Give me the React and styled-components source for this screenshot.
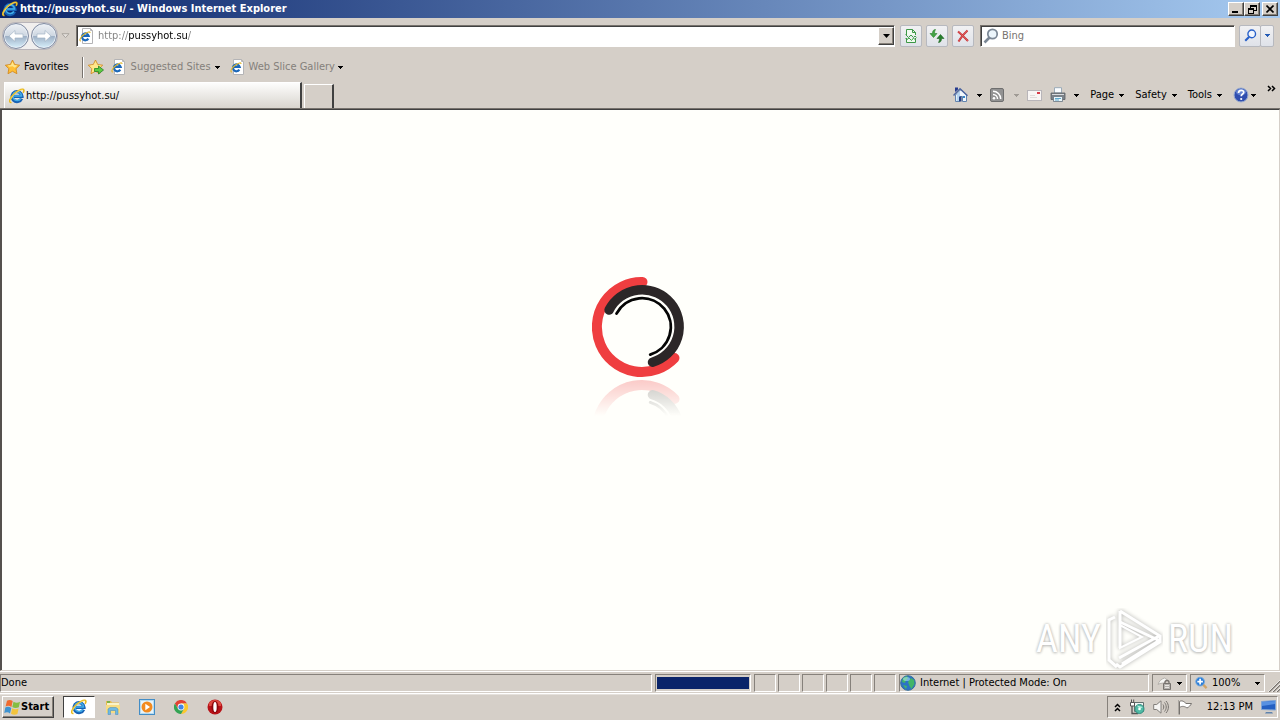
import React from "react";
import styled, { createGlobalStyle, css } from "styled-components";

const Global = createGlobalStyle`
  * { box-sizing: border-box; }
  body { margin: 0; background: #d5cfc8; }
  body, button, input, select {
    font-family: "DejaVu Sans Condensed", "DejaVu Sans", sans-serif;
    font-size: 11px;
    line-height: 14px;
    color: #000;
  }
  svg { display: block; flex: none; }
`;

const Window = styled.div`
  min-height: 100vh;
  display: flex;
  flex-direction: column;
  background: #d5cfc8;
`;

const TitleBar = styled.header`
  height: 18px;
  padding: 0 2px;
  display: flex;
  align-items: center;
  gap: 2px;
  background: linear-gradient(90deg, #0a246a, #a6caf0);
`;
const Title = styled.h1`
  flex: 1;
  margin: 0;
  color: #fff;
  font-size: 11px;
  line-height: 14px;
  white-space: nowrap;
`;
const raised = css`
  background: #d5cfc8;
  border: 1px solid;
  border-color: #fff #404040 #404040 #fff;
  box-shadow: inset -1px -1px 0 #868078;
`;
const WindowButtons = styled.div`
  display: flex;
`;
const WindowButton = styled.button`
  ${raised}
  width: 16px;
  height: 14px;
  padding: 0;
  display: flex;
  align-items: center;
  justify-content: center;
  margin-left: ${(p) => (p.$apart ? "2px" : "0")};
`;

const NavBar = styled.nav`
  height: 34px;
  padding: 1px 6px 0 3px;
  display: flex;
  align-items: center;
`;
const NavArrows = styled.div`
  display: flex;
  gap: 2px;
  border-radius: 14px;
  background: #f1efee;
  box-shadow: 0 0 0 1px #b9b5ba;
`;
const RoundButton = styled.button`
  width: 26px;
  height: 26px;
  padding: 0;
  border: 1px solid #7f8aa0;
  border-radius: 50%;
  display: flex;
  align-items: center;
  justify-content: center;
  background: linear-gradient(#eef1f5 0%, #ced7e2 48%, #9fb1c6 52%, #d7f0fc 100%);
  box-shadow: inset 0 0 0 1px #e8eef5;
`;
const PlainButton = styled.button`
  padding: 0;
  border: 0;
  background: none;
  display: flex;
  align-items: center;
  gap: ${(p) => p.$gap || 0}px;
  color: ${(p) => (p.$muted ? "#84807b" : "#000")};
  white-space: nowrap;
`;
const HistoryButton = styled(PlainButton)`
  margin: 0 6px 0 4px;
`;
const Field = styled.div`
  flex: ${(p) => (p.$width ? "none" : "1")};
  width: ${(p) => (p.$width ? `${p.$width}px` : "auto")};
  min-width: 0;
  height: 22px;
  padding-left: 2px;
  display: flex;
  align-items: center;
  gap: 3px;
  background: #fff;
  border: 1px solid;
  border-color: #77726d #fff #fff #77726d;
  box-shadow: inset 1px 1px 0 #404040;
`;
const TextInput = styled.input`
  flex: 1;
  min-width: 0;
  padding: 0;
  border: 0;
  outline: 0;
  background: none;
  color: #77736f;
  &::placeholder { color: #77736f; opacity: 1; }
`;
const AddressInput = styled(TextInput)`
  background: linear-gradient(90deg, #808080 31px, #000 31px 90px, #808080 90px);
  background-clip: text;
  color: transparent;
`;
const DropButton = styled.button`
  ${raised}
  width: 16px;
  height: 18px;
  padding: 0;
  display: flex;
  align-items: center;
  justify-content: center;
`;
const NavButtons = styled.div`
  display: flex;
  gap: 4px;
  margin: 0 6px 0 5px;
`;
const ToolButton = styled.button`
  width: ${(p) => p.$width || 22}px;
  height: 22px;
  padding: 0;
  display: flex;
  align-items: center;
  justify-content: center;
  border: 1px solid #b7b9bf;
  border-radius: 2px;
  background: linear-gradient(#f1f1f3, #dfe2e9);
`;
const SearchButtons = styled.div`
  display: flex;
  margin-left: 4px;
  ${ToolButton} + ${ToolButton} { margin-left: -1px; }
`;

const FavoritesBar = styled.div`
  height: 30px;
  padding-left: 5px;
  display: flex;
  align-items: center;
`;
const Divider = styled.span`
  width: 2px;
  height: 21px;
  margin: 0 4px 0 13px;
  background: linear-gradient(90deg, #77726d 50%, #fff 50%);
`;
const FavoriteLinks = styled.div`
  display: flex;
  gap: 10px;
  margin-left: 7px;
`;

const TabRow = styled.div`
  height: 27px;
  padding-left: 4px;
  display: flex;
  align-items: flex-end;
  border-bottom: 1px solid #77726d;
`;
const Tab = styled.button`
  width: 298px;
  height: 26px;
  padding: 1px 4px 0;
  display: flex;
  align-items: center;
  gap: 1px;
  border: 1px solid;
  border-color: #fff #404040 transparent #fff;
  border-bottom: 0;
  border-right-width: 2px;
  background: linear-gradient(#fdfdfc, #d9d5cf);
`;
const NewTab = styled.button`
  width: 30px;
  height: 24px;
  margin-left: 2px;
  border: 1px solid;
  border-color: #fff #404040 transparent #fff;
  border-right-width: 2px;
  border-bottom: 0;
  background: #d5cfc8;
`;
const CommandBar = styled.div`
  height: 26px;
  margin-left: auto;
  padding-right: 4px;
  display: flex;
  align-items: center;
  gap: 11px;
`;
const CommandIcons = styled.div`
  display: flex;
  align-items: center;
  gap: 8px;
`;
const Overflow = styled(PlainButton)`
  align-self: flex-start;
  padding-top: 3px;
`;

const Page = styled.main`
  flex: 1;
  min-height: 300px;
  position: relative;
  display: flex;
  justify-content: center;
  align-items: center;
  padding-bottom: 84px;
  background: #fffffb;
  border: 1px solid;
  border-color: #404040 #d5cfc8 #d5cfc8 #55514d;
  box-shadow: inset 1px 0 0 #55514d;
`;
const Watermark = styled.div`
  position: absolute;
  right: 46px;
  bottom: 0;
  height: 62px;
  display: flex;
  align-items: center;
  gap: 5px;
  font-family: "Roboto Condensed", "Liberation Sans Narrow", "Liberation Sans", sans-serif;
  font-size: 38px;
  line-height: 50px;
  color: #fff;
  text-shadow: 0 0 3px #b4b4b2, 0 1px 3px #c8c8c5;
`;

const StatusBar = styled.footer`
  height: 23px;
  padding: 2px 0 1px;
  display: flex;
  gap: 3px;
  border-top: 1px solid #fff;
  border-bottom: 1px solid #fff;
`;
const Pane = styled.div`
  flex: ${(p) => (p.$width ? "none" : "1")};
  width: ${(p) => (p.$width ? `${p.$width}px` : "auto")};
  padding: 0 ${(p) => p.$pad || 0}px;
  display: flex;
  align-items: center;
  gap: 4px;
  border: 1px solid;
  border-color: #86817b #fff #fff #86817b;
  white-space: nowrap;
  & > :last-child { margin-left: ${(p) => (p.$spread ? "auto" : "0")}; }
`;
const CellGroup = styled.div`
  display: flex;
  gap: 2px;
`;
const Progress = styled.div`
  flex: 1;
  height: 12px;
  background: #0a246a;
`;
const ResizeCorner = styled.div`
  display: flex;
  flex: none;
  align-items: flex-end;
`;

const TaskBar = styled.footer`
  height: 26px;
  padding: 0 2px 1px;
  display: flex;
  align-items: center;
  border-top: 1px solid #e5e1dc;
`;
const StartButton = styled.button`
  ${raised}
  width: 52px;
  height: 22px;
  padding: 0 1px;
  display: flex;
  align-items: center;
  font-weight: bold;
`;
const Launchers = styled.div`
  display: flex;
  gap: 2px;
  margin-left: 9px;
`;
const Launcher = styled.button`
  width: 32px;
  height: 22px;
  padding: 0;
  display: flex;
  align-items: center;
  justify-content: center;
  border: 1px solid transparent;
  background: none;
  ${(p) => p.$active && css`
    background: #fff;
    border-color: #404040 #fff #fff #404040;
  `}
`;
const Tray = styled.div`
  height: 22px;
  margin-left: auto;
  padding: 0 1px 0 6px;
  display: flex;
  align-items: center;
  gap: 8px;
  border: 1px solid;
  border-color: #86817b #fff #fff #86817b;
`;
const Clock = styled.time`
  margin-left: 6px;
  white-space: nowrap;
`;

const Caret = ({ color = "#000" }) => (
  <svg width="5" height="3" viewBox="0 0 5 3" shapeRendering="crispEdges">
    <path d="M0 0h5L2.500 3z" fill={color} />
  </svg>
);

const IE = ({ size = 16 }) => (
  <svg width={size} height={size} viewBox="0 0 16 16">
    <path d="M12.600 10.600A5 5 0 1 1 13 8.400H5" fill="none" stroke="#1762b5" strokeWidth="3.200" />
    <path d="M11.800 10.500A4.400 4.400 0 1 1 12.500 7.900H5" fill="none" stroke="#42aee9" strokeWidth="1.500" />
    <path d="M2.500 14.500C-1 15 1 9 6 5c4-3.500 8.600-5 8.900-2.700.1.800-.3 1.700-.8 2.600" fill="none" stroke="#e9b91e" strokeWidth="1.600" />
    <path d="M2 14C.6 13 2.600 8.500 7 5c3-2.300 6-3.600 7-3" fill="none" stroke="#ffed82" strokeWidth=".6" />
  </svg>
);

const PageIE = () => (
  <svg width="16" height="16" viewBox="0 0 16 16">
    <path d="M3.500.5h8l2 2v13h-10z" fill="#fff" stroke="#b4b4b6" />
    <path d="M11.500.5v2h2" fill="none" stroke="#b4b4b6" />
    <path d="M9.300 10.700A3.400 3.400 0 1 1 9.700 8H4" fill="none" stroke="#1c68b9" strokeWidth="2.200" />
    <path d="M2 13C-.8 13 2 8.500 5.500 6c3-2.200 5.700-3 5.500-1" fill="none" stroke="#e2b72d" strokeWidth="1.100" />
  </svg>
);

const Arrow = ({ flip }) => (
  <svg width="16" height="14" viewBox="0 0 16 14">
    <path
      d={flip ? "M15 7 9 1.500v3.500H1v4h8v3.500z" : "M1 7l6-5.500v3.500h8v4H7v3.500z"}
      fill="#fff"
      stroke="#a3b4c6"
      strokeWidth=".7"
    />
  </svg>
);

const Star = ({ add }) => (
  <svg width="16" height="16" viewBox="0 0 16 16">
    <path d="M7.500 1l2.200 4.500 5 .7L11 9.700l.9 5-4.400-2.400L3 14.700l.8-5L.3 6.200l5-.7z" fill={add ? "#ffe889" : "#ffbf36"} stroke="#cf8418" strokeWidth=".8" />
    <path d="M7.500 2.800l1.500 3.300 3.500.5-2.700 2.200-2.300-1.500-3.200.5-1.800-1.200 3.500-.5z" fill="#ffe68b" />
    {add && <path d="M6.500 9.500h4V7l5 4-5 4v-2.500h-4z" fill="#5dcb42" stroke="#268224" strokeWidth=".8" />}
  </svg>
);

const Compat = () => (
  <svg width="12" height="14" viewBox="0 0 12 14">
    <path d="M1.500 6V.5h6l3 3V6M7.500.5v3h3M1.500 9v4.500h9V9" fill="#f1fbf0" stroke="#3c9846" />
    <path d="M.5 5.500l3 3L6 6l2.500 2.500L10 7l1.500 1.500M.5 9l1.500 1.500L4 9l2.500 2.500L8.500 9l2 2" fill="none" stroke="#3fa04a" />
  </svg>
);
const Refresh = () => (
  <svg width="16" height="16" viewBox="0 0 16 16">
    <path d="M6.500 1.500C4.300 1.700 3.500 3 3.500 5.500H1L4.500 9.500 8 5.500H5.500c0-1.500.2-2.500 1-4z" fill="#43a444" stroke="#287f2c" strokeWidth=".6" />
    <path d="M9.500 14.500c2.200-.2 3-1.500 3-4H15l-3.500-4-3.500 4h2.500c0 1.500-.2 2.500-1 4z" fill="#277d2b" stroke="#1d6822" strokeWidth=".6" />
  </svg>
);
const Stop = () => (
  <svg width="14" height="14" viewBox="0 0 14 14">
    <path d="M2 2.500c3 2.500 6.500 6 10 9.500M11.500 1.500C8 4.500 5 8 2.500 12.500" fill="none" stroke="#c52e32" strokeWidth="2" />
    <path d="M2 2.500c3 2.500 6.500 6 10 9.500M11.500 1.500C8 4.500 5 8 2.500 12.500" fill="none" stroke="#f07c79" strokeWidth=".6" />
  </svg>
);
const Magnifier = ({ color = "#7b8795", fill = "#ecf5fb", size = 16 }) => (
  <svg width={size} height={size} viewBox="0 0 16 16">
    <path d="M6.500 9.500L1.500 14.500" stroke={color} strokeWidth="2.600" />
    <circle cx="9.500" cy="6" r="4.700" fill={fill} stroke={color} strokeWidth="1.700" />
  </svg>
);
const ZoomGlass = () => (
  <svg width="13" height="14" viewBox="0 0 14 14">
    <path d="M8.500 8.500l4 4" stroke="#d1a467" strokeWidth="2.400" />
    <circle cx="5.500" cy="5.500" r="4.700" fill="#2b7dd7" stroke="#75a9db" />
    <path d="M5.500 2.500v6M2.500 5.500h6" stroke="#fff" strokeWidth="1.800" />
  </svg>
);
const Home = () => (
  <svg width="16" height="16" viewBox="0 0 16 16">
    <path d="M2.500 8v6.500h4v-5h3v5h4V8L8 2.500z" fill="#f1f7fc" stroke="#6284af" />
    <path d="M2 5V.5h3v2" fill="#253a8e" />
    <path d="M.5 8.500L7 1.800l7.500 7" fill="none" stroke="#4e669f" strokeWidth="1.500" />
    <path d="M4 7l3-3v10H3.500z" fill="#b6d4ef" />
    <path d="M6 9.500h2.500v5H6z" fill="#243f83" />
    <path d="M10 9h2v2h-2z" fill="#3686c6" />
  </svg>
);
const Feed = () => (
  <svg width="14" height="14" viewBox="0 0 14 14">
    <rect x=".5" y=".5" width="13" height="13" rx="1.500" fill="#929292" stroke="#6f6f6f" />
    <circle cx="4" cy="10.200" r="1.300" fill="#fff" />
    <path d="M3 6.500a4.500 4.500 0 0 1 4.500 4.500M3 3.300A7.700 7.700 0 0 1 10.700 11" fill="none" stroke="#fff" strokeWidth="1.500" />
  </svg>
);
const Mail = () => (
  <svg width="15" height="11" viewBox="0 0 15 11">
    <rect x=".5" y=".5" width="14" height="10" fill="#f8f5f4" stroke="#b8b5b9" />
    <path d="M3 5.500h5M3 7.500h7" stroke="#dfdbda" />
    <path d="M10 2h3v2h-3z" fill="#d73b48" />
  </svg>
);
const Printer = () => (
  <svg width="16" height="16" viewBox="0 0 16 16">
    <path d="M4.500 6V.7h7V6z" fill="#fbfdff" stroke="#9babb8" />
    <path d="M1 6h14v6.500H1z" fill="#7d8288" stroke="#5c6064" strokeWidth=".8" />
    <path d="M2 7.500h12" stroke="#d9dcdf" />
    <path d="M3.500 9.500h9v5h-9z" fill="#eaf5fa" stroke="#687580" strokeWidth=".8" />
    <path d="M5 11.500h6M5 13h4" stroke="#61a9cc" />
  </svg>
);
const Help = () => (
  <svg width="16" height="16" viewBox="0 0 16 16">
    <circle cx="8" cy="8" r="7" fill="#304eaf" stroke="#9caed0" />
    <ellipse cx="8" cy="5" rx="5" ry="3.300" fill="#6382d1" />
    <path d="M5.500 6c.2-3.700 5.500-3.200 5.200-.5C10.500 7 8.200 7.200 8.200 9.300" fill="none" stroke="#fff" strokeWidth="1.700" />
    <circle cx="8.200" cy="12" r="1.100" fill="#fff" />
  </svg>
);
const DoubleChevron = ({ up }) => (
  <svg width={up ? 7 : 9} height={up ? 9 : 7} viewBox={up ? "0 0 7 9" : "0 0 9 7"}>
    <path d={up ? "M1 4l2.500-2.500L6 4M1 8l2.500-2.500L6 8" : "M1 1l2.500 2.500L1 6M5 1l2.500 2.500L5 6"} fill="none" stroke="#000" strokeWidth="1.500" />
  </svg>
);

const Rings = () => (
  <>
    <path d="M50.500 5A45 45 0 1 0 82.500 81" stroke="#ef3e40" strokeWidth="10" />
    <path d="M17.100 33A37 37 0 1 1 60.500 85.200" stroke="#2c2728" strokeWidth="9.500" />
    <path d="M24.500 36.600A28.800 28.800 0 1 1 58.200 77.600" stroke="#050505" strokeWidth="2.800" />
  </>
);
const Spinner = () => (
  <svg width="96" height="142" viewBox="0 0 96 142" role="img" aria-label="Loading">
    <defs>
      <linearGradient id="fade" x1="0" y1="1" x2="0" y2="0">
        <stop offset="0" stopColor="#fff" stopOpacity=".28" />
        <stop offset="1" stopColor="#fff" stopOpacity="0" />
      </linearGradient>
      <mask id="reflection" maskUnits="userSpaceOnUse" x="0" y="64" width="100" height="37">
        <rect y="64" width="100" height="37" fill="url(#fade)" />
      </mask>
    </defs>
    <g fill="none" strokeLinecap="round">
      <Rings />
      <g transform="matrix(1 0 0 -1 0 203)">
        <g mask="url(#reflection)"><Rings /></g>
      </g>
    </g>
  </svg>
);
const LogoShape = styled.g`
  filter: drop-shadow(0 0 2px #adadab);
`;
const PlayLogo = () => (
  <svg width="57" height="62" viewBox="0 0 57 62" fill="none" stroke="#fff" strokeWidth="3">
    <LogoShape>
      <path d="M14 3v37M14 3l40 25v6L14 59l-4-3" />
      <path d="M14 14l38 18M9 9L3 12v40l8 7M13 50l40-22M16 56l38-24" />
      <path d="M14 40V17l22 12z" strokeWidth="2" />
    </LogoShape>
  </svg>
);

const Globe = () => (
  <svg width="16" height="16" viewBox="0 0 16 16">
    <circle cx="8" cy="8" r="7.300" fill="#2c73c5" stroke="#356e9c" />
    <path d="M3 3l4-2 1 2-2 2-1 3-3-1zM8 7l3-4 3 2 .5 4-3 5-2-3zM3 10l4 1-1 3z" fill="#42b568" />
    <ellipse cx="6.500" cy="4" rx="3.500" ry="2" fill="#b8eaf3" opacity=".55" />
  </svg>
);
const Lock = () => (
  <svg width="15" height="15" viewBox="0 0 15 15">
    <path d="M1 8.500C2 5 4.500 3 7.500 2l3 2-4 3-3.500.5z" fill="#f7f7f5" stroke="#b5b1ac" />
    <path d="M8 8V6.500a2 2 0 0 1 4 0V8" fill="none" stroke="#77736f" strokeWidth="1.300" />
    <path d="M6.500 7.500h7v6h-7z" fill="#b4b1ad" stroke="#77736f" />
    <path d="M8 9.500h4M8 11.500h4" stroke="#e9e6e3" />
  </svg>
);
const Grip = () => (
  <svg width="12" height="12" viewBox="0 0 12 12">
    <path d="M1 12L12 1M5 12l7-7M9 12l3-3" stroke="#77726d" strokeWidth="1.300" />
    <path d="M0 12L12 0M4 12l8-8M8 12l4-4" stroke="#fff" strokeWidth=".7" />
  </svg>
);
const Flag = () => (
  <svg width="17" height="17" viewBox="0 0 17 17">
    <path d="M3 1.800c2-1.300 3.800-1 5.700.3L7.400 8C5.600 6.700 3.700 6.500 1.600 7.500z" fill="#f06a2e" />
    <path d="M9.500 2.700c2 1.300 4.200 1.500 6.500 0l-1.200 5.500c-2.100 1.200-4.500 1-6.500-.1z" fill="#85bd41" />
    <path d="M1.300 8.500c2-1 4-.8 6 .4l-1.300 5.500c-1.600-1.200-3.500-1.400-5.700-.4z" fill="#3f93d0" />
    <path d="M8.200 9.300c2 1 4.100 1.200 6.400.2l-1.200 5.400c-2.200 1.200-4.400.9-6.400-.2z" fill="#f3c43c" />
  </svg>
);
const Explorer = () => (
  <svg width="16" height="16" viewBox="0 0 16 16">
    <path d="M1 2h5l1 1.500h7V14H1z" fill="#e6bc50" />
    <path d="M2 4h12v2H2z" fill="#f9f2c8" />
    <path d="M1 6h14v8H1z" fill="#f6dc83" />
    <path d="M3 15.500V10l2-1.500h6l2 1.500v5.500h-2.500v-4h-5v4z" fill="#6eb9e3" stroke="#4589b4" strokeWidth=".5" />
    <path d="M2 3h3" stroke="#58ae49" strokeWidth="1.500" />
  </svg>
);
const MediaPlayer = () => (
  <svg width="16" height="16" viewBox="0 0 16 16">
    <rect x=".5" y=".5" width="15" height="15" fill="#b6dcf2" stroke="#438dc6" />
    <rect x="2" y="2" width="12" height="12" fill="#e7f4fb" />
    <circle cx="8" cy="8" r="5.500" fill="#f28b20" />
    <path d="M6.300 4.800v6.400L11 8z" fill="#fff" />
  </svg>
);
const Chrome = () => (
  <svg width="14" height="14" viewBox="0 0 14 14">
    <path d="M.9 3.500a7 7 0 0 1 12.200 0H7L4 8.700z" fill="#e34133" />
    <path d="M13.100 3.500A7 7 0 0 1 7 14l3-5.300L7 3.500z" fill="#fbc82e" />
    <path d="M7 14A7 7 0 0 1 .9 3.500L4 8.700h6z" fill="#34a353" />
    <circle cx="7" cy="7" r="3.400" fill="#fff" />
    <circle cx="7" cy="7" r="2.600" fill="#4285e7" />
  </svg>
);
const Opera = () => (
  <svg width="16" height="16" viewBox="0 0 16 16">
    <circle cx="8" cy="8" r="7.500" fill="#b81218" />
    <path d="M2 4a7.500 7.500 0 0 1 12 0v3H2z" fill="#df4940" />
    <ellipse cx="8" cy="8" rx="3.500" ry="6" fill="#8a080d" />
    <ellipse cx="8" cy="8" rx="1.700" ry="5" fill="#fff" />
  </svg>
);
const SafelyRemove = () => (
  <svg width="16" height="16" viewBox="0 0 16 16">
    <path d="M5.500 3.500h9v9h-9z" fill="#eef5f4" stroke="#62706e" />
    <path d="M3 6v8.500h6" fill="none" stroke="#555" strokeWidth="1.300" />
    <path d="M1.500 3.500h4V7h-4zM2.500.5v3M4.700.5v3" fill="#fff" stroke="#555" />
    <circle cx="10.500" cy="10" r="4.500" fill="#51bba5" stroke="#328d80" />
    <path d="M8 6.500l2.500 3.500 3.500-2" fill="#b7eee0" />
    <circle cx="10.500" cy="10" r="1.300" fill="#fff" />
  </svg>
);
const Speaker = () => (
  <svg width="16" height="14" viewBox="0 0 16 14">
    <path d="M.7 4.500h3L8 .8v12.400L3.700 9.500h-3z" fill="#f6f5f3" stroke="#827e7a" />
    <path d="M10 4.500c1 1.500 1 3.500 0 5M11.500 2.500c2.300 2.500 2.300 6.500 0 9M13 1c3.200 3.500 3.200 8.500 0 12" fill="none" stroke="#77736f" />
  </svg>
);
const ActionFlag = () => (
  <svg width="16" height="16" viewBox="0 0 16 16">
    <path d="M2.500 15.500V2.500C5 1 7 2.500 9 4.500h5.500c-1 2-2.500 3.500-4.500 4.500-2-1.500-4.500-2.500-7.500-.5" fill="#fff" stroke="#77736f" />
    <path d="M1.500 1v14.500" stroke="#aaa6a1" />
  </svg>
);
const Desktop = () => (
  <svg width="15" height="14" viewBox="0 0 15 14">
    <path d="M.5 1.500l14-1v9.500l-14-.5z" fill="#2460c2" stroke="#7ea4d6" />
    <path d="M1 2l13-1v3L1 6z" fill="#5791e2" />
    <path d="M5 12h6l1 1.500H4z" fill="#5f83ad" />
  </svg>
);

const Menu = ({ children, label, gap = 5, caret }) => (
  <PlainButton $gap={gap} aria-label={label}>
    {children}
    <Caret color={caret} />
  </PlainButton>
);

export default function App() {
  return (
    <>
      <Global />
      <Window>
        <TitleBar>
          <IE />
          <Title>http://pussyhot.su/ - Windows Internet Explorer</Title>
          <WindowButtons>
            <WindowButton aria-label="Minimize">
              <svg width="8" height="8"><path d="M0 6h6v2H0z" /></svg>
            </WindowButton>
            <WindowButton aria-label="Restore">
              <svg width="9" height="9" fill="none" stroke="#000" shapeRendering="crispEdges">
                <path d="M2.500 3V.5h6v5H6M2 1.500h7M.5 3.500h5v5h-5zM0 4.500h6" />
              </svg>
            </WindowButton>
            <WindowButton $apart aria-label="Close">
              <svg width="8" height="8"><path d="M.5.5l7 7M7.500.5l-7 7" stroke="#000" strokeWidth="1.600" /></svg>
            </WindowButton>
          </WindowButtons>
        </TitleBar>

        <NavBar>
          <NavArrows>
            <RoundButton aria-label="Back"><Arrow /></RoundButton>
            <RoundButton aria-label="Forward"><Arrow flip /></RoundButton>
          </NavArrows>
          <HistoryButton aria-label="Recent pages">
            <svg width="9" height="6" viewBox="0 0 9 6">
              <path d="M1 .7h7L4.500 4.700z" fill="#e4e0dc" stroke="#aaa59f" />
            </svg>
          </HistoryButton>
          <Field>
            <PageIE />
            <AddressInput aria-label="Address" defaultValue="http://pussyhot.su/" />
            <DropButton aria-label="Show addresses">
              <svg width="7" height="4"><path d="M0 0h7L3.500 4z" /></svg>
            </DropButton>
          </Field>
          <NavButtons>
            <ToolButton aria-label="Compatibility view"><Compat /></ToolButton>
            <ToolButton aria-label="Refresh"><Refresh /></ToolButton>
            <ToolButton aria-label="Stop"><Stop /></ToolButton>
          </NavButtons>
          <Field $width={255}>
            <Magnifier />
            <TextInput aria-label="Search" placeholder="Bing" />
          </Field>
          <SearchButtons>
            <ToolButton aria-label="Search"><Magnifier color="#2860c9" fill="#f1f6ff" size={13} /></ToolButton>
            <ToolButton $width={14} aria-label="Search options"><Caret color="#245bb5" /></ToolButton>
          </SearchButtons>
        </NavBar>

        <FavoritesBar>
          <PlainButton $gap={3}><Star />Favorites</PlainButton>
          <Divider />
          <PlainButton aria-label="Add to favorites bar"><Star add /></PlainButton>
          <FavoriteLinks>
            <PlainButton $muted $gap={4}><PageIE />Suggested Sites<Caret /></PlainButton>
            <PlainButton $muted $gap={3}><PageIE />Web Slice Gallery<Caret /></PlainButton>
          </FavoriteLinks>
        </FavoritesBar>

        <TabRow>
          <Tab><IE />http://pussyhot.su/</Tab>
          <NewTab aria-label="New tab" />
          <CommandBar>
            <CommandIcons>
              <Menu label="Home" gap={8}><Home /></Menu>
              <Menu label="Feeds" gap={10} caret="#a09b95"><Feed /></Menu>
              <PlainButton aria-label="Read mail"><Mail /></PlainButton>
              <Menu label="Print" gap={8}><Printer /></Menu>
            </CommandIcons>
            <Menu>Page</Menu>
            <Menu>Safety</Menu>
            <Menu>Tools</Menu>
            <Menu label="Help" gap={2}><Help /></Menu>
            <Overflow aria-label="More commands"><DoubleChevron /></Overflow>
          </CommandBar>
        </TabRow>

        <Page>
          <Spinner />
          <Watermark><span>ANY</span><PlayLogo /><span>RUN</span></Watermark>
        </Page>

        <StatusBar>
          <Pane>Done</Pane>
          <Pane $width={96} $pad={1}><Progress /></Pane>
          <CellGroup>
            {[0, 1, 2, 3, 4, 5].map((n) => <Pane key={n} $width={22} />)}
          </CellGroup>
          <Pane $width={250}><Globe />Internet | Protected Mode: On</Pane>
          <Pane $width={35} $pad={4} $spread><Lock /><Caret /></Pane>
          <Pane $width={75} $pad={4} $spread><ZoomGlass />100%<Caret /></Pane>
          <ResizeCorner><Grip /></ResizeCorner>
        </StatusBar>

        <TaskBar>
          <StartButton><Flag />Start</StartButton>
          <Launchers>
            <Launcher $active aria-label="Internet Explorer"><IE /></Launcher>
            <Launcher aria-label="Windows Explorer"><Explorer /></Launcher>
            <Launcher aria-label="Media Player"><MediaPlayer /></Launcher>
            <Launcher aria-label="Chrome"><Chrome /></Launcher>
            <Launcher aria-label="Opera"><Opera /></Launcher>
          </Launchers>
          <Tray>
            <PlainButton aria-label="Show hidden icons"><DoubleChevron up /></PlainButton>
            <SafelyRemove />
            <Speaker />
            <ActionFlag />
            <Clock>12:13 PM</Clock>
            <Desktop />
          </Tray>
        </TaskBar>
      </Window>
    </>
  );
}
